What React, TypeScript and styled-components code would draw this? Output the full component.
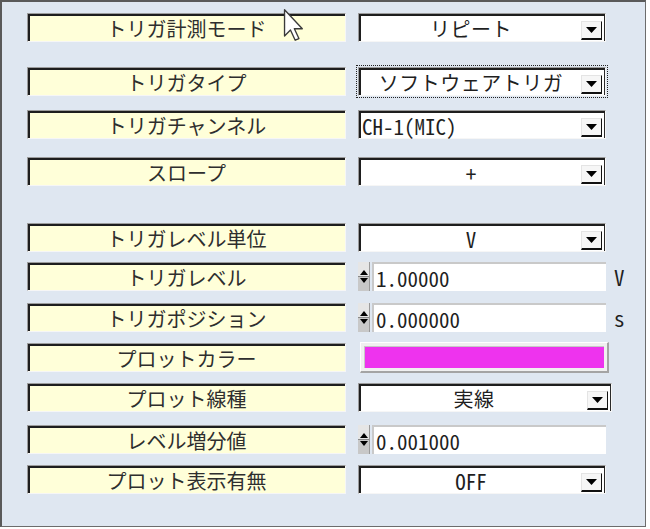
import styled, { createGlobalStyle } from "styled-components";

const GlobalStyle = createGlobalStyle`
  html, body {
    margin: 0;
    padding: 0;
    background: #ffffff;
  }
  body {
    font-family: "Noto Sans CJK JP", "DejaVu Sans", sans-serif;
  }
`;

const MONO = `"Noto Sans Mono CJK JP", "Noto Sans CJK JP", "DejaVu Sans Mono", monospace`;

const Panel = styled.div`
  position: relative;
  box-sizing: border-box;
  width: 646px;
  height: 527px;
  border: 2px solid #5a5a5a;
  border-right: 1px solid #6c6c6c;
  border-bottom: 1px solid #6c6c6c;
  background: #dfe7f1;
  padding: 11px 0 0 25px;
  display: flex;
  flex-direction: column;
`;

const Row = styled.div<{ $gap: number }>`
  display: flex;
  align-items: center;
  gap: 12px;
  height: 29px;
  margin-top: ${(p) => p.$gap}px;
`;

const Label = styled.div`
  box-sizing: border-box;
  width: 319px;
  height: 29px;
  background: #ffffd9;
  border-top: 1px solid #9c9c9c;
  border-left: 1px solid #9c9c9c;
  border-right: 1px solid #f6f6f6;
  border-bottom: 1px solid #f6f6f6;
  box-shadow: inset 2px 2px 0 #1e1e1e;
  display: flex;
  align-items: center;
  justify-content: center;
  padding-top: 1px;
  font-size: 20px;
  color: #2e2e2e;
  white-space: nowrap;
`;

const Select = styled.div<{ $w: number; $focus?: boolean }>`
  box-sizing: border-box;
  width: ${(p) => p.$w}px;
  height: 29px;
  background: #ffffff;
  border-top: 1px solid #9c9c9c;
  border-left: 1px solid #9c9c9c;
  border-right: 1px solid #f6f6f6;
  border-bottom: 1px solid #f6f6f6;
  box-shadow: inset 2px 2px 0 #1e1e1e, inset -1px 0 0 #2a2a2a;
  display: flex;
  align-items: center;
  outline: ${(p) => (p.$focus ? "1px dotted #222" : "none")};
  outline-offset: 1px;
`;

const SelectText = styled.span<{ $mono?: boolean; $left?: boolean }>`
  flex: 1;
  padding: 2px 0 0 ${(p) => (p.$left ? 3 : 4)}px;
  text-align: ${(p) => (p.$left ? "left" : "center")};
  font-family: ${(p) => (p.$mono ? MONO : `"Noto Sans CJK JP", sans-serif`)};
  font-size: ${(p) => (p.$mono ? 21 : 20)}px;
  letter-spacing: ${(p) => (p.$mono ? 0 : 0.5)}px;
  color: #1f1f1f;
  white-space: nowrap;
  overflow: hidden;
`;

const ArrowButton = styled.span`
  box-sizing: border-box;
  align-self: flex-end;
  width: 21px;
  height: 19px;
  margin: 0 3px 1px 2px;
  background: #f6f6f6;
  border-top: 1px solid #e4e4e4;
  border-left: 1px solid #e4e4e4;
  border-right: 1px solid #111;
  border-bottom: 2px solid #111;
  display: flex;
  align-items: center;
  justify-content: center;
`;

const Spinner = styled.div`
  display: flex;
  align-items: center;
  gap: 2px;
`;

const SpinButtons = styled.div`
  box-sizing: border-box;
  width: 12px;
  height: 29px;
  display: flex;
  flex-direction: column;
  background: #d6d6d6;
  border-right: 1px solid #9a9a9a;
`;

const SpinHalf = styled.span<{ $down?: boolean }>`
  flex: 1;
  display: flex;
  align-items: ${(p) => (p.$down ? "flex-start" : "flex-end")};
  justify-content: center;
  padding: ${(p) => (p.$down ? "1px 0 0" : "0 0 1px")};
  background: ${(p) => (p.$down ? "#c8c8c8" : "#e6e6e6")};
  border-bottom: ${(p) => (p.$down ? "none" : "1px solid #888")};
`;

const Field = styled.div`
  box-sizing: border-box;
  width: 234px;
  height: 29px;
  background: #ffffff;
  border-top: 2px solid #c9c9c9;
  border-left: 2px solid #c9c9c9;
  display: flex;
  align-items: center;
  padding: 1px 0 0 2px;
  font-family: ${MONO};
  font-size: 21px;
  color: #1f1f1f;
`;

const Unit = styled.span`
  margin-left: -4px;
  font-family: ${MONO};
  font-size: 21px;
  color: #1f1f1f;
`;

const ColorWell = styled.div`
  box-sizing: border-box;
  width: 249px;
  height: 31px;
  margin-left: 2px;
  padding: 3px;
  background: #f0f0f0;
  border-top: 1px solid #ffffff;
  border-left: 1px solid #ffffff;
  border-right: 2px solid #a4a4a4;
  border-bottom: 2px solid #a4a4a4;
`;

const Swatch = styled.div<{ $color: string }>`
  width: 100%;
  height: 100%;
  background: ${(p) => p.$color};
  border-top: 1px solid #c7c7c7;
  border-left: 1px solid #c7c7c7;
  box-sizing: border-box;
`;

const Cursor = styled.svg`
  position: absolute;
  left: 280px;
  top: 6px;
`;

function DownArrow() {
  return (
    <svg width="11" height="6" viewBox="0 0 11 6">
      <path d="M0 0 H11 L5.5 6 Z" fill="#000" />
    </svg>
  );
}

function SpinBox({ value, unit }: { value: string; unit?: string }) {
  return (
    <>
      <Spinner>
        <SpinButtons>
          <SpinHalf>
            <svg width="8" height="5" viewBox="0 0 8 5">
              <path d="M0 5 H8 L4 0 Z" fill="#000" />
            </svg>
          </SpinHalf>
          <SpinHalf $down>
            <svg width="8" height="5" viewBox="0 0 8 5">
              <path d="M0 0 H8 L4 5 Z" fill="#000" />
            </svg>
          </SpinHalf>
        </SpinButtons>
        <Field>{value}</Field>
      </Spinner>
      {unit && <Unit>{unit}</Unit>}
    </>
  );
}

function Dropdown({
  text,
  width = 248,
  mono,
  left,
  focus,
}: {
  text: string;
  width?: number;
  mono?: boolean;
  left?: boolean;
  focus?: boolean;
}) {
  return (
    <Select $w={width} $focus={focus}>
      <SelectText $mono={mono} $left={left}>
        {text}
      </SelectText>
      <ArrowButton>
        <DownArrow />
      </ArrowButton>
    </Select>
  );
}

export default function App() {
  return (
    <Panel>
      <GlobalStyle />
      <Row $gap={0}>
        <Label>トリガ計測モード</Label>
        <Dropdown text="リピート" />
      </Row>
      <Row $gap={25}>
        <Label>トリガタイプ</Label>
        <Dropdown text="ソフトウェアトリガ" focus />
      </Row>
      <Row $gap={14}>
        <Label>トリガチャンネル</Label>
        <Dropdown text="CH-1(MIC)" mono left />
      </Row>
      <Row $gap={18}>
        <Label>スロープ</Label>
        <Dropdown text="+" mono />
      </Row>
      <Row $gap={37}>
        <Label>トリガレベル単位</Label>
        <Dropdown text="V" mono />
      </Row>
      <Row $gap={10}>
        <Label>トリガレベル</Label>
        <SpinBox value="1.00000" unit="V" />
      </Row>
      <Row $gap={12}>
        <Label>トリガポジション</Label>
        <SpinBox value="0.000000" unit="s" />
      </Row>
      <Row $gap={11}>
        <Label>プロットカラー</Label>
        <ColorWell>
          <Swatch $color="#ee33ee" />
        </ColorWell>
      </Row>
      <Row $gap={11}>
        <Label>プロット線種</Label>
        <Dropdown text="実線" width={254} />
      </Row>
      <Row $gap={13}>
        <Label>レベル増分値</Label>
        <SpinBox value="0.001000" />
      </Row>
      <Row $gap={11}>
        <Label>プロット表示有無</Label>
        <Dropdown text="OFF" mono />
      </Row>
      <Cursor width="22" height="34" viewBox="0 0 13 20">
        <path
          d="M1.5 1 V16.5 L5 13 L7.8 19 L10 18 L7.3 12.2 H12 Z"
          fill="#fff"
          stroke="#3a3a3a"
          strokeWidth="0.8"
          strokeLinejoin="round"
        />
      </Cursor>
    </Panel>
  );
}
